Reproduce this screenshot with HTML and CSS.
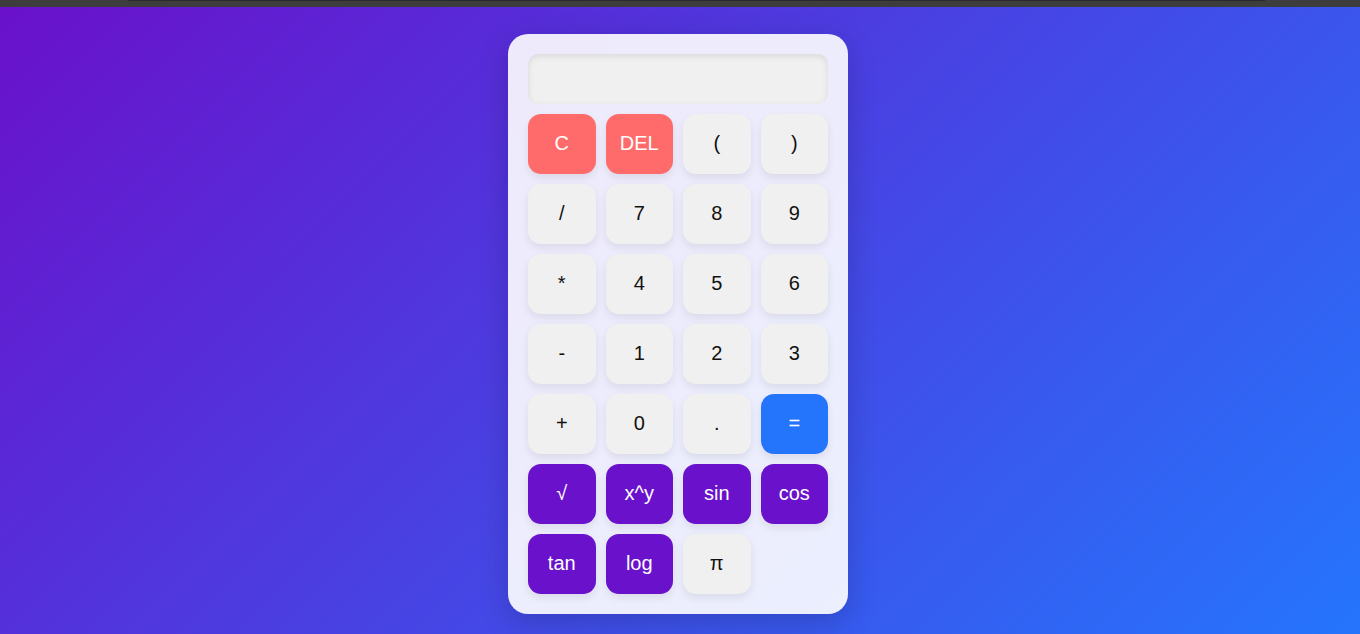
FILE: index.html
```html
<!DOCTYPE html>
<html>
<head>
<meta charset="utf-8">
<title>Calculator</title>
<link rel="stylesheet" href="styles.css">
</head>
<body>
<div class="topbar"><div class="topline"></div></div>
<main class="page">
  <div class="calc">
    <div class="display"></div>
    <div class="keys">
      <button class="key red">C</button>
      <button class="key red">DEL</button>
      <button class="key">(</button>
      <button class="key">)</button>
      <button class="key">/</button>
      <button class="key">7</button>
      <button class="key">8</button>
      <button class="key">9</button>
      <button class="key">*</button>
      <button class="key">4</button>
      <button class="key">5</button>
      <button class="key">6</button>
      <button class="key">-</button>
      <button class="key">1</button>
      <button class="key">2</button>
      <button class="key">3</button>
      <button class="key">+</button>
      <button class="key">0</button>
      <button class="key">.</button>
      <button class="key blue">=</button>
      <button class="key purple">√</button>
      <button class="key purple">x^y</button>
      <button class="key purple">sin</button>
      <button class="key purple">cos</button>
      <button class="key purple">tan</button>
      <button class="key purple">log</button>
      <button class="key">π</button>
    </div>
  </div>
</main>
</body>
</html>
```
FILE: styles.css
```css
html, body {
  margin: 0;
  padding: 0;
  height: 100%;
  overflow: hidden;
}
body {
  font-family: "Liberation Sans", Arial, sans-serif;
  display: flex;
  flex-direction: column;
}
.topbar {
  height: 7px;
  background: #3d3d3d;
  flex: none;
}
.topline {
  margin: 0 95px 0 128px;
  height: 1px;
  background: #2a2a2a;
}
.page {
  flex: 1;
  background: linear-gradient(135deg, #6a11cb 0%, #2575fc 100%);
  display: flex;
  justify-content: center;
  align-items: flex-start;
  padding: 27px 4px 0 0;
}
.calc {
  width: 300px;
  padding: 20px;
  background: rgba(255, 255, 255, 0.9);
  border-radius: 20px;
  box-shadow: 0 8px 30px rgba(0, 0, 0, 0.18);
}
.display {
  height: 50px;
  margin-bottom: 10px;
  background: #f0f0f0;
  border-radius: 10px;
  box-shadow: inset 0 2px 6px rgba(0, 0, 0, 0.1);
}
.keys {
  display: grid;
  grid-template-columns: repeat(4, 1fr);
  gap: 10px;
}
.key {
  height: 60px;
  border: none;
  border-radius: 13px;
  background: #f0f0f0;
  color: #111;
  font-family: "Liberation Sans", Arial, sans-serif;
  font-size: 20px;
  padding: 0 0 2px 0;
  box-shadow: 0 4px 8px rgba(0, 0, 0, 0.08);
}
.key.red {
  background: #ff6b6b;
  color: #fff;
}
.key.blue {
  background: #2575fc;
  color: #fff;
}
.key.purple {
  background: #6a11cb;
  color: #fff;
}
```
